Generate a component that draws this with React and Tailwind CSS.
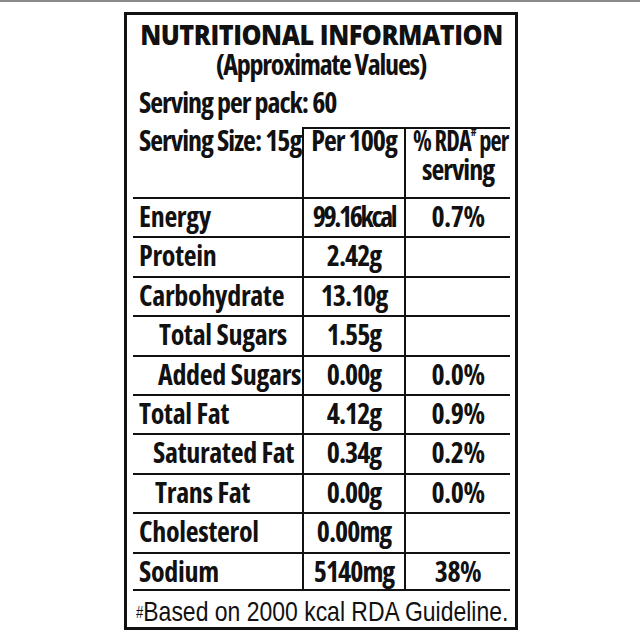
const rows = [
  { label: 'Energy', pad: 'pl-[6px]', per: '99.16kcal', rda: '0.7%', tight: true },
  { label: 'Protein', pad: 'pl-[6px]', per: '2.42g', rda: '' },
  { label: 'Carbohydrate', pad: 'pl-[6px]', per: '13.10g', rda: '' },
  { label: 'Total Sugars', pad: 'pl-[26px]', per: '1.55g', rda: '' },
  { label: 'Added Sugars', pad: 'pl-[25px]', per: '0.00g', rda: '0.0%' },
  { label: 'Total Fat', pad: 'pl-[6px]', per: '4.12g', rda: '0.9%' },
  { label: 'Saturated Fat', pad: 'pl-[20px]', per: '0.34g', rda: '0.2%' },
  { label: 'Trans Fat', pad: 'pl-[22px]', per: '0.00g', rda: '0.0%' },
  { label: 'Cholesterol', pad: 'pl-[6px]', per: '0.00mg', rda: '' },
  { label: 'Sodium', pad: 'pl-[6px]', per: '5140mg', rda: '38%', last: true },
];

function Row({ label, pad, per, rda, last, tight }) {
  const h = last ? 'h-[37px]' : 'h-[39.4px]';
  return (
    <>
      <div className={`${h} ${pad} border-b-2 border-[#111] leading-[34px] whitespace-nowrap tracking-[-0.3px]`}>{label}</div>
      <div
        className={`${h} border-b-2 border-l-2 border-[#111] leading-[34px] text-center whitespace-nowrap ${
          tight ? 'tracking-[-2.4px]' : 'tracking-[-1px]'
        }`}
      >
        {per}
      </div>
      <div className={`${h} border-b-2 border-l-2 border-[#111] leading-[34px] text-center tracking-[-0.5px]`}>{rda}</div>
    </>
  );
}

export default function App() {
  return (
    <div className="w-[640px] h-[643px] bg-white overflow-hidden">
      <div className="h-[2px] bg-[#8a8a8a]" />
      <div
        className="ml-[124px] mt-[10px] w-[394px] h-[618px] border-[3px] border-[#111] text-[#111] text-[28px] font-bold"
        style={{ fontFamily: '"Open Sans", sans-serif', fontStretch: '75%' }}
      >
        <div className="pt-[4px] flex justify-center leading-[30px] whitespace-nowrap">
          <span className="shrink-0 inline-block font-extrabold tracking-[-0.5px] scale-x-[0.9]" style={{ fontStretch: '100%' }}>
            NUTRITIONAL INFORMATION
          </span>
        </div>
        <div className="text-center leading-[30px] tracking-[-1.2px]">(Approximate Values)</div>
        <div className="mt-[8px] pl-[12px] leading-[30px] tracking-[-1px]">Serving per pack: 60</div>

        <div className="mt-[10px] ml-[6px] w-[377px] grid grid-cols-[169px_102px_106px]">
          <div className="h-[72px] pl-[6px] border-b-2 border-[#111] leading-[29px] whitespace-nowrap tracking-[-1px]">
            <div className="-mt-[1px]">Serving Size: 15g</div>
          </div>
          <div className="h-[72px] border-t-2 border-b-2 border-l-2 border-[#111] leading-[29px] text-center whitespace-nowrap tracking-[-1px]">
            <div className="-mt-[3px]">Per 100g</div>
          </div>
          <div className="h-[72px] border-t-2 border-b-2 border-l-2 border-[#111] leading-[29px] text-center whitespace-nowrap tracking-[-1px]">
            <div className="-mt-[3px]">
              <span className="inline-block scale-x-[0.87]">
                % RDA<sup className="text-[13px] align-top relative top-[5px]">#</sup> per
              </span>
              <br />
              serving
            </div>
          </div>
          {rows.map((r) => (
            <Row key={r.label} {...r} />
          ))}
        </div>

        <div
          className="pl-[9px] font-normal whitespace-nowrap"
          style={{ fontFamily: '"Liberation Sans", Arial, sans-serif' }}
        >
          <div className="inline-block origin-left scale-x-[0.82] leading-[36px]">
            <span className="text-[16px] align-top relative top-[1px]">#</span>Based on 2000 kcal RDA Guideline.
          </div>
        </div>
      </div>
    </div>
  );
}
